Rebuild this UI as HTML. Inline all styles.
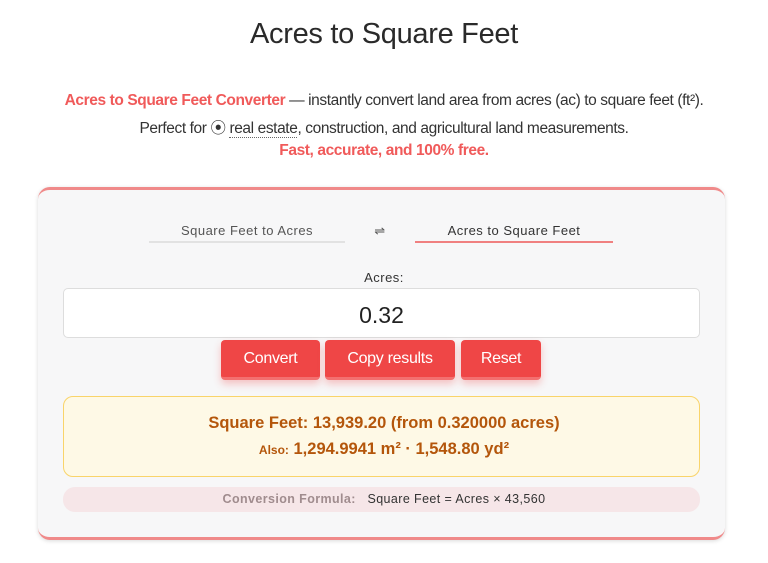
<!DOCTYPE html>
<html><head><meta charset="utf-8"><style>
*{margin:0;padding:0;box-sizing:border-box}
body{width:768px;height:563px;background:#fff;font-family:"Liberation Sans",sans-serif;color:#333;position:relative;overflow:hidden}
.a{position:absolute;left:0;width:768px;text-align:center;white-space:nowrap}
h1{font-weight:normal;font-size:29px;color:#2a2a2a;top:18px;letter-spacing:-0.3px}
.p{font-size:15.5px;letter-spacing:-0.4px;color:#333}
.r{color:#f05a5a;font-weight:bold}
.card{position:absolute;left:38px;top:187px;width:687px;height:353px;background:#f7f7f8;border-radius:12px;border-top:3px solid #f08a8a;border-bottom:3px solid #f08a8a;box-shadow:0 1px 4px rgba(0,0,0,.15)}
.tab{position:absolute;font-size:13px;color:#555;text-align:center;letter-spacing:.5px}
.btn{position:absolute;top:340px;height:40px;background:#ef4646;color:#fff;font-size:16px;border-radius:4px;line-height:38px;text-align:center;box-shadow:0 4px 8px rgba(239,68,68,.3);border-bottom:3px solid #f37070;letter-spacing:-.3px}
</style></head><body>
<h1 class="a">Acres to Square Feet</h1>
<div class="a p" style="top:92px"><span class="r">Acres to Square Feet Converter</span> — instantly convert land area from acres (ac) to square feet (ft²).</div>
<div class="a p" style="top:116px">Perfect for ⦿ <span style="border-bottom:1px dotted #666">real estate</span>, construction, and agricultural land measurements.</div>
<div class="a p r" style="top:142px">Fast, accurate, and 100% free.</div>
<div class="card"></div>
<div class="tab" style="left:149px;top:223px;width:196px;height:20px;border-bottom:2px solid #e2e2e2">Square Feet to Acres</div>
<div class="tab" style="left:370px;top:223px;width:20px">⇌</div>
<div class="tab" style="left:415px;top:223px;width:198px;height:20px;border-bottom:2px solid #f08080;color:#333">Acres to Square Feet</div>
<div class="a" style="top:270px;font-size:13px;color:#333;letter-spacing:.5px">Acres:</div>
<div style="position:absolute;left:63px;top:288px;width:637px;height:50px;background:#fff;border:1px solid #ddd;border-radius:5px;text-align:center;font-size:23px;line-height:52px;color:#222">0.32</div>
<div class="btn" style="left:221px;width:99px">Convert</div>
<div class="btn" style="left:325px;width:130px">Copy results</div>
<div class="btn" style="left:461px;width:80px">Reset</div>
<div style="position:absolute;left:63px;top:396px;width:637px;height:81px;background:#fef9e6;border:1px solid #f9d46a;border-radius:10px"></div>
<div class="a" style="top:414px;font-size:16.5px;font-weight:bold;color:#b4560b">Square Feet: 13,939.20 (from 0.320000 acres)</div>
<div class="a" style="top:440px;font-size:16.5px;font-weight:bold;color:#b4560b"><span style="font-size:12px">Also:</span> 1,294.9941 m² · 1,548.80 yd²</div>
<div style="position:absolute;left:63px;top:487px;width:637px;height:25px;background:#f6e6e8;border-radius:12px"></div>
<div class="a" style="top:492px;font-size:12.5px;color:#333;letter-spacing:.4px"><b style="color:#a08c8e">Conversion Formula:</b>&nbsp;&nbsp; Square Feet = Acres × 43,560</div>
</body></html>
